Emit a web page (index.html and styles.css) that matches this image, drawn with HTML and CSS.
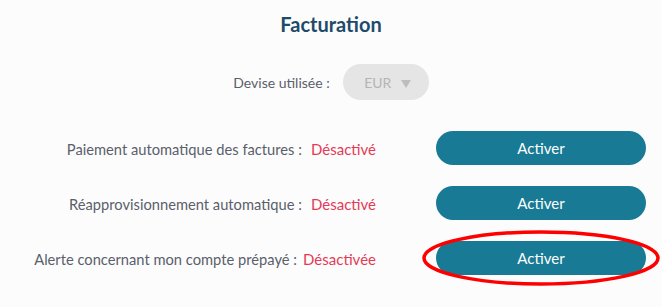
FILE: index.html
```html
<!DOCTYPE html>
<html lang="fr">
  <head>
    <meta charset="UTF-8" />
    <meta name="viewport" content="width=device-width, initial-scale=1.0" />
    <title>Facturation</title>
    <link rel="stylesheet" href="styles.css">
  </head>
  <body>
    <div class="billing">
      <h2 class="title">Facturation</h2>

      <div class="currency">
        <span class="label">Devise utilisée :</span>
        <div class="select">
          <span>EUR</span>
          <span class="arrow"></span>
        </div>
      </div>

      <div class="options">
        <div class="opt-text">
          <span class="label">Paiement automatique des factures :</span>
          <span class="off">Désactivé</span>
        </div>
        <button class="btn">Activer</button>

        <div class="opt-text">
          <span class="label">Réapprovisionnement automatique :</span>
          <span class="off">Désactivé</span>
        </div>
        <button class="btn">Activer</button>

        <div class="opt-text">
          <span class="label">Alerte concernant mon compte prépayé :</span>
          <span class="off tight">Désactivée</span>
        </div>
        <div class="btn-wrap">
          <button class="btn">Activer</button>
          <!-- red circle drawn over the button -->
          <svg class="mark" width="240" height="58" viewBox="0 0 240 58">
            <ellipse cx="120" cy="29" rx="117" ry="26" fill="none" stroke="#f00" stroke-width="3.5" />
          </svg>
        </div>
      </div>
    </div>
  </body>
</html>
```

FILE: styles.css
```css
body {
  margin: 0;
  background-color: #fcfcfc;
  font-family: Lato, "Open Sans", sans-serif;
}
.billing {
  width: 662px;
  height: 307px;
  overflow: hidden;
}
.title {
  margin: 0;
  padding-top: 12px;
  text-align: center;
  font-size: 20px;
  font-weight: 700;
  color: #1d4b6b;
  height: 64px;
  box-sizing: border-box;
}
.currency {
  display: flex;
  justify-content: center;
  align-items: center;
  gap: 13px;
  height: 36px;
}
.label {
  color: #5a5f6b;
  font-size: 14.7px;
}
.currency .label {
  font-size: 14px;
}
.select {
  width: 86px;
  height: 36px;
  border-radius: 18px;
  background-color: #e5e5e5;
  display: flex;
  align-items: center;
  justify-content: center;
  gap: 10px;
  color: #b4b4b4;
  font-size: 14px;
  padding-left: 4px;
  box-sizing: border-box;
}
.arrow {
  width: 0;
  height: 0;
  border-left: 5px solid transparent;
  border-right: 5px solid transparent;
  border-top: 8px solid #bdbdbd;
  margin-top: 4px;
}
.options {
  display: grid;
  grid-template-columns: 376px 210px;
  column-gap: 60px;
  row-gap: 21px;
  margin-top: 31px;
  align-items: center;
}
.opt-text {
  text-align: right;
  white-space: nowrap;
}
.off {
  color: #e53a55;
  font-size: 15px;
  margin-left: 5px;
}
.off.tight {
  margin-left: 2px;
}
.btn {
  width: 210px;
  height: 34px;
  border: none;
  border-radius: 17px;
  background-color: #187a95;
  color: #fff;
  font-family: Lato, "Open Sans", sans-serif;
  font-size: 15px;
  padding: 0;
}
.btn-wrap {
  position: relative;
  height: 34px;
}
.mark {
  position: absolute;
  left: -15px;
  top: -12px;
  pointer-events: none;
}
```
